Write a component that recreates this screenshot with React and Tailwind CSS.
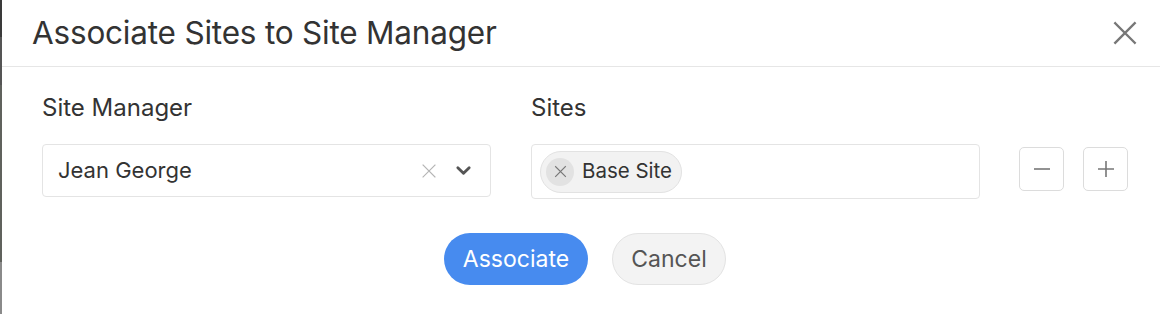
import React from 'react';

const font = { fontFamily: 'Inter, "Noto Sans", sans-serif' };

const XIcon = ({ size = 24, className = '', strokeWidth = 2 }) => (
  <svg width={size} height={size} viewBox="0 0 24 24" fill="none" stroke="currentColor" strokeWidth={strokeWidth} strokeLinecap="square" className={className}>
    <path d="M3 3L21 21M21 3L3 21" />
  </svg>
);

const App = () => {
  return (
    <div className="flex h-[314px] w-[1160px] bg-white text-[#333]" style={font}>
      {/* backdrop edge */}
      <div className="flex w-[2px] flex-col">
        <div className="h-[37px] bg-[#3a3a3a]" />
        <div className="h-[48px] bg-[#555]" />
        <div className="h-[177px] bg-[#60625d]" />
        <div className="flex-1 bg-[#8a8a8a]" />
      </div>

      <div className="flex flex-1 flex-col">
        {/* Header */}
        <div className="flex h-[67px] items-center justify-between border-b border-[#e6e6e6] pl-[30px] pr-[22px]">
          <h1 className="text-[31.5px] font-normal tracking-[-0.2px] text-[#333]">Associate Sites to Site Manager</h1>
          <button className="text-[#777]" aria-label="Close">
            <XIcon size={26} strokeWidth={2.2} />
          </button>
        </div>

        {/* Body */}
        <div className="flex flex-col pl-[40px] pr-[32px] pt-[26px]">
          <div className="flex items-start">
            <div className="flex w-[449px] flex-col">
              <label className="text-[24px] leading-[30px] text-[#333]">Site Manager</label>
              <div className="mt-[21px] flex h-[53px] items-center justify-between rounded-[4px] border border-[#e4e4e4] pl-[15px] pr-[18px]">
                <span className="text-[22px] text-[#333]">Jean George</span>
                <div className="flex items-center gap-[18px]">
                  <XIcon size={16} strokeWidth={1.6} className="text-[#b5b5b5]" />
                  <svg width="17" height="17" viewBox="0 0 24 24" fill="none" stroke="#555" strokeWidth="4" strokeLinecap="round" strokeLinejoin="round">
                    <path d="M4 8l8 8 8-8" />
                  </svg>
                </div>
              </div>
            </div>

            <div className="ml-[40px] flex w-[449px] flex-col">
              <label className="text-[24px] leading-[30px] text-[#333]">Sites</label>
              <div className="mt-[21px] flex h-[55px] items-center rounded-[4px] border border-[#e4e4e4] pl-[8px]">
                <div className="flex h-[42px] items-center gap-[8px] rounded-full border border-[#e2e2e2] bg-[#f2f2f2] pl-[5px] pr-[9px]">
                  <span className="flex h-[28px] w-[28px] items-center justify-center rounded-full bg-[#e2e2e2] text-[#777]">
                    <XIcon size={13} strokeWidth={2.2} />
                  </span>
                  <span className="text-[20.5px] text-[#333]">Base Site</span>
                </div>
              </div>
            </div>

            <div className="ml-[39px] mt-[54px] flex gap-[19px]">
              <button className="flex h-[44px] w-[45px] items-center justify-center rounded-[5px] border border-[#dcdcdc] text-[#777]" aria-label="Remove">
                <svg width="18" height="18" viewBox="0 0 18 18" stroke="currentColor" strokeWidth="1.6"><path d="M1 9h16" /></svg>
              </button>
              <button className="flex h-[44px] w-[45px] items-center justify-center rounded-[5px] border border-[#dcdcdc] text-[#777]" aria-label="Add">
                <svg width="18" height="18" viewBox="0 0 18 18" stroke="currentColor" strokeWidth="1.6"><path d="M1 9h16M9 1v16" /></svg>
              </button>
            </div>
          </div>

          {/* Actions */}
          <div className="mt-[34px] flex justify-center gap-[24px]">
            <button className="h-[52px] w-[144px] rounded-full bg-[#478bef] text-[23px] text-white">Associate</button>
            <button className="h-[52px] w-[114px] rounded-full border border-[#e3e3e3] bg-[#f3f3f3] text-[23px] text-[#555]">Cancel</button>
          </div>
        </div>
      </div>
    </div>
  );
};

export default App;
